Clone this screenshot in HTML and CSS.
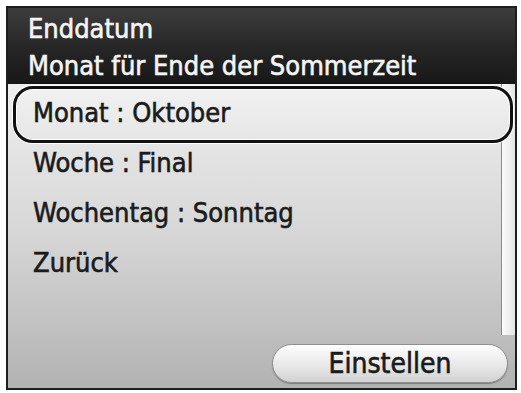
FILE: index.html
```html
<!DOCTYPE html>
<html lang="de">
<head>
<meta charset="utf-8">
<link rel="stylesheet" href="styles.css">
</head>
<body>
<div class="screen">
  <div class="header">
    <div class="title">Enddatum</div>
    <div class="title">Monat für Ende der Sommerzeit</div>
  </div>
  <div class="body">
    <div class="main">
      <ul class="list">
        <li class="item selected">Monat : Oktober</li>
        <li class="item">Woche : Final</li>
        <li class="item">Wochentag : Sonntag</li>
        <li class="item">Zurück</li>
      </ul>
      <div class="scroll"></div>
    </div>
    <div class="footer">
      <button class="btn">Einstellen</button>
    </div>
  </div>
</div>
</body>
</html>
```
FILE: styles.css
```css
html, body {
  margin: 0;
  padding: 0;
  background: #ffffff;
}
.screen {
  margin: 6px 0 0 6px;
  width: 511px;
  height: 384px;
  box-sizing: border-box;
  border: 2px solid #1e1e1e;
  display: flex;
  flex-direction: column;
  font-family: "DejaVu Sans Condensed", "DejaVu Sans", sans-serif;
  font-stretch: condensed;
  font-size: 27px;
  -webkit-text-stroke: 0.6px currentColor;
  overflow: hidden;
}
.header {
  height: 76px;
  flex: none;
  box-sizing: border-box;
  padding: 2px 0 0 20px;
  background: linear-gradient(#3d3d3d, #272727 50%, #171717);
  color: #f4f4f4;
  line-height: 37px;
}
.body {
  flex: 1;
  display: flex;
  flex-direction: column;
  background: linear-gradient(#efefef, #d6d6d6 50%, #b2b2b2);
}
.main {
  height: 251px;
  flex: none;
  display: flex;
}
.list {
  flex: 1;
  margin: 0;
  padding: 4px 0 0 0;
  list-style: none;
}
.item {
  position: relative;
  height: 50px;
  line-height: 50px;
  padding-left: 25px;
  color: #1b1b1b;
}
.item.selected {
  isolation: isolate;
}
.item.selected::before {
  content: "";
  position: absolute;
  left: 5px;
  right: -12px;
  top: -2px;
  height: 57px;
  box-sizing: border-box;
  border: 3px solid #111111;
  border-radius: 20px;
  box-shadow: 0 0 0 1px #ffffff, inset 0 0 0 1px #ffffff;
  background: linear-gradient(#f1f1f1, #e6e6e6);
  z-index: -1;
}
.scroll {
  width: 14px;
  flex: none;
  background: linear-gradient(to right, #8a8a8a 0, #8a8a8a 1px, #fbfbfb 1px, #e4e4e4);
}
.footer {
  flex: 1;
  display: flex;
  justify-content: flex-end;
  align-items: flex-start;
  padding: 9px 7px 0 0;
}
.btn {
  width: 236px;
  height: 39px;
  box-sizing: border-box;
  border: 1px solid #8e8e8e;
  border-radius: 20px;
  background: linear-gradient(#fdfdfd, #e8e8e8 55%, #d2d2d2);
  box-shadow: inset 0 1px 0 #ffffff, 0 1px 1px #7a7a7a;
  font: inherit;
  font-size: 28px;
  line-height: 37px;
  color: #1b1b1b;
  padding: 0;
}
```
